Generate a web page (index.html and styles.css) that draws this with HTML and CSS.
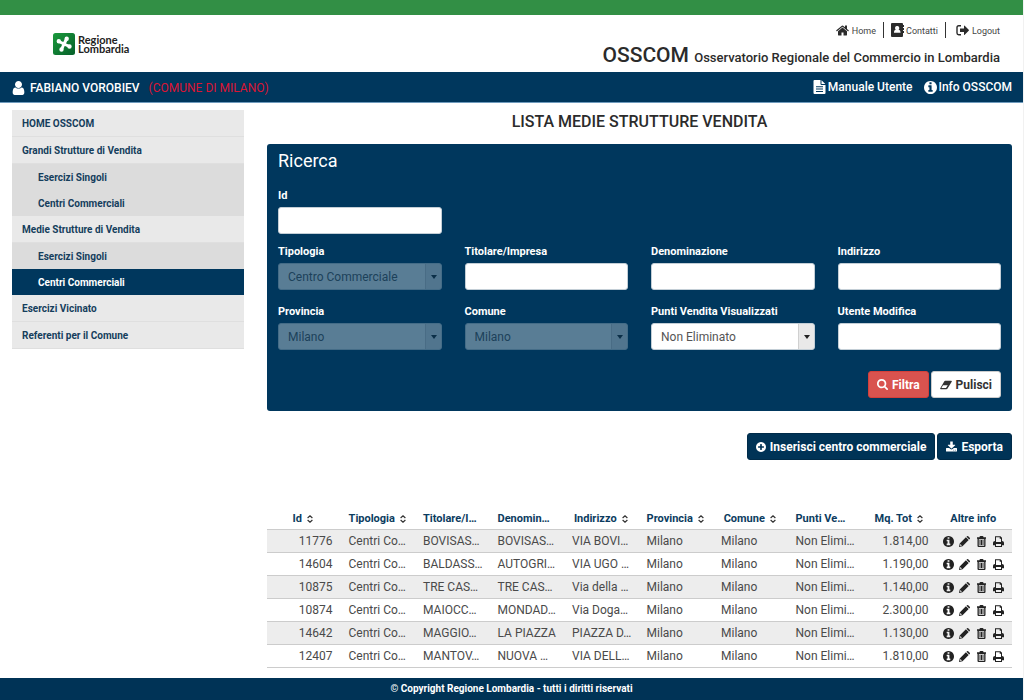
FILE: index.html
```html
<!DOCTYPE html>
<html lang="it">
<head>
<meta charset="utf-8">
<title>OSSCOM - Lista medie strutture vendita</title>
<link rel="stylesheet" href="styles.css">
</head>
<body>
<svg class="sprite" aria-hidden="true">
  <symbol id="home" viewBox="64 192 1664 1408"><path d="M1472 992v480q0 26-19 45t-45 19h-384v-384h-256v384h-384q-26 0-45-19t-19-45v-480q0-1 .5-3t.5-3l575-474 575 474q1 2 1 6zm223-69l-62 74q-8 9-21 11h-3q-13 0-21-7l-692-577-692 577q-12 8-24 7-13-2-21-11l-62-74q-8-10-7-23.5t11-21.5l719-599q32-26 76-26t76 26l244 204v-195q0-14 9-23t23-9h192q14 0 23 9t9 23v408l219 182q10 8 11 21.500t-7 23.500z"/></symbol>
  <symbol id="user" viewBox="256 128 1280 1536"><path d="M1536 1399q0 109-62.500 187t-150.500 78h-854q-88 0-150.500-78t-62.500-187q0-85 8.500-160.500t31.500-152 58.500-131 94-89 134.500-34.500q131 128 313 128t313-128q76 0 134.500 34.500t94 89 58.500 131 31.500 152 8.500 160.500zm-256-887q0 159-112.500 271.500t-271.500 112.500-271.500-112.500-112.500-271.500 112.500-271.500 271.500-112.500 271.500 112.500 112.500 271.500z"/></symbol>
  <symbol id="search" viewBox="64 128 1664 1664"><path d="M1216 832q0-185-131.500-316.500t-316.500-131.500-316.500 131.500-131.500 316.500 131.500 316.500 316.500 131.500 316.500-131.500 131.500-316.500zm512 832q0 52-38 90t-90 38q-54 0-90-38l-343-342q-179 124-399 124-143 0-273.500-55.500t-225-150-150-225-55.500-273.500 55.500-273.500 150-225 225-150 273.500-55.500 273.500 55.500 225 150 150 225 55.500 273.500q0 220-124 399l343 343q37 37 37 90z"/></symbol>
  <symbol id="info" viewBox="128 128 1536 1536"><path d="M1152 1376v-160q0-14-9-23t-23-9h-96v-512q0-14-9-23t-23-9h-320q-14 0-23 9t-9 23v160q0 14 9 23t23 9h96v320h-96q-14 0-23 9t-9 23v160q0 14 9 23t23 9h448q14 0 23-9t9-23zm-128-896v-160q0-14-9-23t-23-9h-192q-14 0-23 9t-9 23v160q0 14 9 23t23 9h192q14 0 23-9t9-23zm640 416q0 209-103 385.500t-279.500 279.500-385.500 103-385.500-103-279.500-279.500-103-385.500 103-385.500 279.500-279.500 385.500-103 385.500 103 279.500 279.500 103 385.500z"/></symbol>
  <symbol id="plus" viewBox="128 128 1536 1536"><path d="M1344 960v-128q0-26-19-45t-45-19h-256v-256q0-26-19-45t-45-19h-128q-26 0-45 19t-19 45v256h-256q-26 0-45 19t-19 45v128q0 26 19 45t45 19h256v256q0 26 19 45t45 19h128q26 0 45-19t19-45v-256h256q26 0 45-19t19-45zm320-64q0 209-103 385.500t-279.500 279.500-385.500 103-385.500-103-279.500-279.500-103-385.500 103-385.500 279.500-279.500 385.500-103 385.500 103 279.500 279.500 103 385.500z"/></symbol>
  <symbol id="contact" viewBox="0 0 13 14"><path fill-rule="evenodd" d="M1 0h10q1 0 1 1v1h1v2h-1v1h1v2h-1v1h1v2h-1v3q0 1-1 1H1q-1 0-1-1V1q0-1 1-1zm5 3a2 2 0 0 0-1.300 3.500Q3 7 3 9v.8h6.500V9Q9.500 7 7.600 6.500A2 2 0 0 0 6 3z"/></symbol>
  <symbol id="logout" viewBox="0 0 13 12"><path d="M5 1.200H2.700Q1 1.200 1 3v5.500q0 1.700 1.700 1.700H5" fill="none" stroke="currentColor" stroke-width="1.400"/><path d="M4 4h4V1.500q0-.8.7-.2l4 4q.5.500 0 1l-4 4q-.7.600-.7-.3V7.500H4z"/></symbol>
  <symbol id="file" viewBox="0 0 12 14"><path fill-rule="evenodd" d="M1 0h6v4q0 1 1 1h4v8q0 1-1 1H1q-1 0-1-1V1q0-1 1-1zm7 .2L11.800 4H8zM2.500 6.300v1h7v-1zm0 2.300v1h7v-1zm0 2.300v1h7v-1z"/></symbol>
  <symbol id="eraser" viewBox="0 0 13 10"><path fill-rule="evenodd" d="M5.500.5h6.700q1 0 .5 1L8 9q-.4.500-1 .5H.8q-1 0-.5-1L4.700 1q.3-.5.800-.5zM3.300 5.300 1.500 8.300h5l1.900-3z"/></symbol>
  <symbol id="download" viewBox="0 0 13 12"><path fill-rule="evenodd" d="M5 0h3v4h2.700q.6 0 .2.500L7 8.200q-.5.400-1 0L2.100 4.500Q1.700 4 2.300 4H5zM.6 7.800h3.200l1.400 1.300q1.300 1 2.600 0l1.400-1.300h3.200q.6 0 .6.600v2.800q0 .8-.6.800H.6q-.6 0-.6-.8V8.400q0-.6.600-.6zm8.200 2.100v.8h.8v-.8zm1.800 0v.8h.8v-.8z"/></symbol>
  <symbol id="pencil" viewBox="0 0 11 11"><path fill-rule="evenodd" d="M0 11l.7-3.500L6.900 1.300l2.800 2.800L3.500 10.300zM7.500.8l.5-.5q.6-.6 1.200 0l1.500 1.500q.6.600 0 1.200l-.5.500zM1.400 8.100l-.3 1.400.5.500 1.300-.4z"/></symbol>
  <symbol id="trash" viewBox="0 0 10 11"><path fill-rule="evenodd" d="M3 1.300Q3 0 4 0h2q1 0 1 1.300h2.500v1.500H9V9.700Q9 11 8 11H2Q1 11 1 9.700V2.800H.5V1.300zM2.300 3.300v6.400h5.400V3.300z"/><path d="M3 4h1v5H3zM4.500 4h1v5h-1zM6 4h1v5H6z"/></symbol>
  <symbol id="print" viewBox="0 0 11 11"><path fill-rule="evenodd" d="M2 5V.3h5.500L9 1.800V5q2 0 2 1.700v2.600H9V11H2V9.300H0V6.700Q0 5 2 5zm1-3.700V6h5V2.700H6.700V1.300zM3 8v2h5V8z"/></symbol>
  <symbol id="sort" viewBox="0 0 6 8"><path d="M.6 3 3 .8 5.400 3M.6 5 3 7.200 5.400 5" fill="none" stroke="currentColor" stroke-width="1.200"/></symbol>
</svg>

<header class="top">
  <a class="brand" href="#">
    <svg class="brand-mark" viewBox="0 0 22 22" aria-hidden="true">
      <defs><linearGradient id="leaf" x1="0" y1="0" x2="1" y2="1"><stop offset="0" stop-color="#1b9a3c"/><stop offset="1" stop-color="#06602a"/></linearGradient></defs>
      <rect width="22" height="22" rx="2.500" fill="url(#leaf)"/>
      <g stroke="#fff" stroke-width="3" stroke-linecap="round" fill="#fff"><path d="M11 11 6 8.500M11 11l2.500-5M11 11l5.500 2.500M11 11 8.500 16.500"/><circle cx="5.800" cy="8.300" r=".7"/><circle cx="13.700" cy="5.800" r=".7"/><circle cx="16.500" cy="13.500" r=".7"/><circle cx="8.500" cy="16.500" r=".7"/></g>
    </svg>
    <span class="brand-name">Regione<br>Lombardia</span>
  </a>
  <div class="top-right">
    <nav class="quick">
      <a href="#"><svg class="i13"><use href="#home"/></svg><span>Home</span></a>
      <a href="#"><svg class="i14"><use href="#contact"/></svg><span>Contatti</span></a>
      <a href="#"><svg class="i13"><use href="#logout"/></svg><span>Logout</span></a>
    </nav>
    <p class="app-title"><strong>OSSCOM</strong> Osservatorio Regionale del Commercio in Lombardia</p>
  </div>
</header>

<div class="userbar">
  <div class="who"><svg class="i14"><use href="#user"/></svg><span>FABIANO VOROBIEV</span><span class="town">(COMUNE DI MILANO)</span></div>
  <nav class="help">
    <a href="#"><svg class="i14"><use href="#file"/></svg>Manuale Utente</a>
    <a href="#"><svg class="i13"><use href="#info"/></svg>Info OSSCOM</a>
  </nav>
</div>

<div class="layout">
  <nav class="side">
    <a href="#">HOME OSSCOM</a>
    <a href="#">Grandi Strutture di Vendita</a>
    <a class="sub" href="#">Esercizi Singoli</a>
    <a class="sub" href="#">Centri Commerciali</a>
    <a href="#">Medie Strutture di Vendita</a>
    <a class="sub" href="#">Esercizi Singoli</a>
    <a class="sub active" href="#">Centri Commerciali</a>
    <a href="#">Esercizi Vicinato</a>
    <a href="#">Referenti per il Comune</a>
  </nav>

  <main class="main">
    <h1>LISTA MEDIE STRUTTURE VENDITA</h1>
    <form class="panel">
      <h2>Ricerca</h2>
      <div class="fields">
        <div class="field"><label for="f-id">Id</label><input id="f-id" type="text"></div>
      </div>
      <div class="fields">
        <div class="field"><label for="f-tip">Tipologia</label><div class="select off"><select id="f-tip" disabled><option>Centro Commerciale</option></select></div></div>
        <div class="field"><label for="f-tit">Titolare/Impresa</label><input id="f-tit" type="text"></div>
        <div class="field"><label for="f-den">Denominazione</label><input id="f-den" type="text"></div>
        <div class="field"><label for="f-ind">Indirizzo</label><input id="f-ind" type="text"></div>
      </div>
      <div class="fields last">
        <div class="field"><label for="f-pro">Provincia</label><div class="select off"><select id="f-pro" disabled><option>Milano</option></select></div></div>
        <div class="field"><label for="f-com">Comune</label><div class="select off"><select id="f-com" disabled><option>Milano</option></select></div></div>
        <div class="field"><label for="f-pun">Punti Vendita Visualizzati</label><div class="select"><select id="f-pun"><option>Non Eliminato</option></select></div></div>
        <div class="field"><label for="f-ute">Utente Modifica</label><input id="f-ute" type="text"></div>
      </div>
      <div class="actions">
        <button class="btn red" type="button"><svg class="i11"><use href="#search"/></svg>Filtra</button>
        <button class="btn white" type="button"><svg class="i12"><use href="#eraser"/></svg>Pulisci</button>
      </div>
    </form>

    <div class="actions outer">
      <button class="btn navy" type="button"><svg class="i10"><use href="#plus"/></svg>Inserisci centro commerciale</button>
      <button class="btn navy" type="button"><svg class="i11"><use href="#download"/></svg>Esporta</button>
    </div>

    <table class="grid">
      <thead>
        <tr>
          <th>Id<svg class="sort"><use href="#sort"/></svg></th>
          <th>Tipologia<svg class="sort"><use href="#sort"/></svg></th>
          <th class="cut">Titolare/I…</th>
          <th class="cut">Denomin…</th>
          <th>Indirizzo<svg class="sort"><use href="#sort"/></svg></th>
          <th>Provincia<svg class="sort"><use href="#sort"/></svg></th>
          <th>Comune<svg class="sort"><use href="#sort"/></svg></th>
          <th class="cut">Punti Ve…</th>
          <th>Mq. Tot<svg class="sort"><use href="#sort"/></svg></th>
          <th>Altre info</th>
        </tr>
      </thead>
      <tbody id="rows"></tbody>
    </table>
  </main>
</div>

<footer class="foot">© Copyright Regione Lombardia - tutti i diritti riservati</footer>
<script src="app.js"></script>
</body>
</html>
```

FILE: styles.css
```css
* { box-sizing: border-box; }

body {
  margin: 0;
  min-height: 100vh;
  display: flex;
  flex-direction: column;
  border-right: 1px solid #f1f1f1;
  background: #fff;
  color: #2b2b2b;
  font-family: Roboto, "Liberation Sans", sans-serif;
  font-size: 12px;
}

a { color: inherit; text-decoration: none; }
svg { fill: currentColor; flex: none; }
.sprite { display: none; }
.i10 { width: 10px; height: 10px; }
.i11 { width: 11px; height: 11px; }
.i12 { width: 12px; height: 12px; }
.i13 { width: 13px; height: 13px; }
.i14 { width: 13px; height: 14px; }

.top {
  display: flex;
  justify-content: space-between;
  height: 72px;
  padding: 0 23px 0 53px;
  border-top: 15px solid #328f45;
}

.brand { display: flex; align-items: center; gap: 3px; padding-top: 1px; color: #222; }
.brand-mark { width: 22px; height: 22px; }
.brand-name { font: 700 11px/9px Lato, sans-serif; }

.top-right { display: flex; flex-direction: column; align-items: flex-end; padding-top: 7px; }
.quick { display: flex; font-size: 9px; line-height: 13px; }
.quick a { display: flex; align-items: center; gap: 2px; padding: 0 7px; border-right: 1px solid #333; }
.quick span { padding-top: 3px; color: #444; }
.quick a:last-child { padding: 0 0 0 10px; border-right: 0; gap: 3px; }
.quick a:first-child { gap: 3px; }
.app-title { margin: 4px 0 0; font-size: 13px; font-weight: 500; line-height: 26px; }
.app-title strong { margin-right: 2px; font-size: 21px; font-weight: 500; }

.userbar {
  display: flex;
  justify-content: space-between;
  align-items: center;
  height: 31px;
  padding: 0 11px 0 12px;
  border-bottom: 1px solid #6f9bbd;
  background: #00375d;
  color: #fff;
  font-weight: 500;
}
.who { display: flex; align-items: center; gap: 5px; padding-top: 2px; }
.town { margin-left: 4px; color: #dc1433; font-weight: 400; }
.help { display: flex; gap: 11px; }
.help a { display: flex; align-items: center; gap: 2px; }

.layout {
  flex: 1;
  display: grid;
  grid-template-columns: 232px minmax(0, 1fr);
  gap: 23px;
  align-items: start;
  padding: 7px 11px 9px 12px;
}

.side { display: flex; flex-direction: column; background: #e9e9e9; color: #153e5c; font-size: 10px; font-weight: 700; line-height: 24px; }
.side a { padding: 2px 10px 0; border-bottom: 1px solid #dfdfdf; }
.side .sub { padding-left: 26px; border-bottom: 0; background: #dcdcdc; }
.side .active { background: #00375d; color: #fff; }

h1 { margin: 0 0 10px; font-size: 16px; font-weight: 500; line-height: 24px; text-align: center; }

.panel { padding: 6px 11px 13px; border-radius: 3px; background: #00375d; color: #fff; }
h2 { margin: 0 0 15px; font-size: 18px; font-weight: 400; line-height: 22px; }
.fields { display: grid; grid-template-columns: repeat(4, minmax(0, 1fr)); gap: 23px; margin-bottom: 9px; }
.fields + .fields { margin-bottom: 13px; }
.fields.last { margin-bottom: 21px; }
.field label { display: block; margin-bottom: 2px; font-size: 11px; font-weight: 700; line-height: 18px; }
.field input, .select, .select select { display: block; width: 100%; height: 27px; border: 1px solid #c3ced6; border-radius: 3px; background: #fff; font-family: inherit; font-size: 12px; color: #555; }
.field input { padding: 0 8px; }
.select { position: relative; overflow: hidden; background: linear-gradient(#d0d0d0, #d0d0d0) right 15px top / 1px 100% no-repeat, linear-gradient(#e9e9e9, #e9e9e9) right top / 15px 100% no-repeat, #fff; }
.select select { height: 25px; padding: 0 18px 0 9px; border: 0; background: transparent; appearance: none; opacity: 1; }
.select::after { content: ""; position: absolute; right: 4px; top: 11px; border: 3px solid transparent; border-top: 4px solid #222; border-bottom: 0; }
.select.off { opacity: .35; }

.actions { display: flex; justify-content: flex-end; gap: 2px; }
.outer { margin: 22px 0 47px; }
.btn { display: flex; align-items: center; gap: 4px; height: 27px; padding: 0 8px; border: 1px solid; border-radius: 3px; font: 700 12px/16px Roboto, "Liberation Sans", sans-serif; }
.red { background: #d9534f; border-color: #d43f3a; color: #fff; }
.white { background: #fff; border-color: #ccc; color: #333; }
.navy { background: #003356; border-color: #002b49; color: #fff; }

.grid { width: 100%; border-collapse: separate; border-spacing: 0; table-layout: fixed; font-size: 12px; color: #4a4a4a; }
.grid th { height: 23px; padding: 0 3px 0 0; border-bottom: 1px solid #ccc; color: #0c3c60; font-size: 11px; font-weight: 700; white-space: nowrap; }
.grid td { height: 23px; padding: 0 7px; border-bottom: 1px solid #ccc; white-space: nowrap; }
.grid .cut { padding-left: 7px; text-align: left; }
.grid tbody tr:nth-child(odd) { background: #ededed; }
.grid .num { padding-right: 9px; text-align: right; }
.sort { width: 6px; height: 8px; margin-left: 5px; color: #333; vertical-align: -1px; }
.tools { display: flex; justify-content: space-between; align-items: center; margin-right: 1px; margin-left: -2px; }
.tools button { display: flex; padding: 0; border: 0; background: none; color: #222; }
.tools svg { width: 11px; height: 11px; }

.foot { height: 22px; background: #003356; color: #fff; font-size: 10px; font-weight: 700; line-height: 22px; text-align: center; }
```

FILE: app.js
```js
const rows = [
  ["11776", "BOVISAS…", "BOVISAS…", "VIA BOVI…", "1.814,00"],
  ["14604", "BALDASS…", "AUTOGRI…", "VIA UGO …", "1.190,00"],
  ["10875", "TRE CAS…", "TRE CAS…", "Via della …", "1.140,00"],
  ["10874", "MAIOCC…", "MONDAD…", "Via Doga…", "2.300,00"],
  ["14642", "MAGGIO…", "LA PIAZZA", "PIAZZA D…", "1.130,00"],
  ["12407", "MANTOV…", "NUOVA …", "VIA DELL…", "1.810,00"]
];
const tools = [["info", "Dettaglio"], ["pencil", "Modifica"], ["trash", "Elimina"], ["print", "Stampa"]]
  .map(([icon, label]) => `<button type="button" aria-label="${label}"><svg><use href="#${icon}"/></svg></button>`)
  .join("");
document.getElementById("rows").innerHTML = rows.map(([id, owner, name, street, area]) =>
  `<tr><td class="num">${id}</td><td>Centri Co…</td><td>${owner}</td><td>${name}</td><td>${street}</td>` +
  `<td>Milano</td><td>Milano</td><td>Non Elimi…</td><td class="num">${area}</td><td><div class="tools">${tools}</div></td></tr>`
).join("");
```
